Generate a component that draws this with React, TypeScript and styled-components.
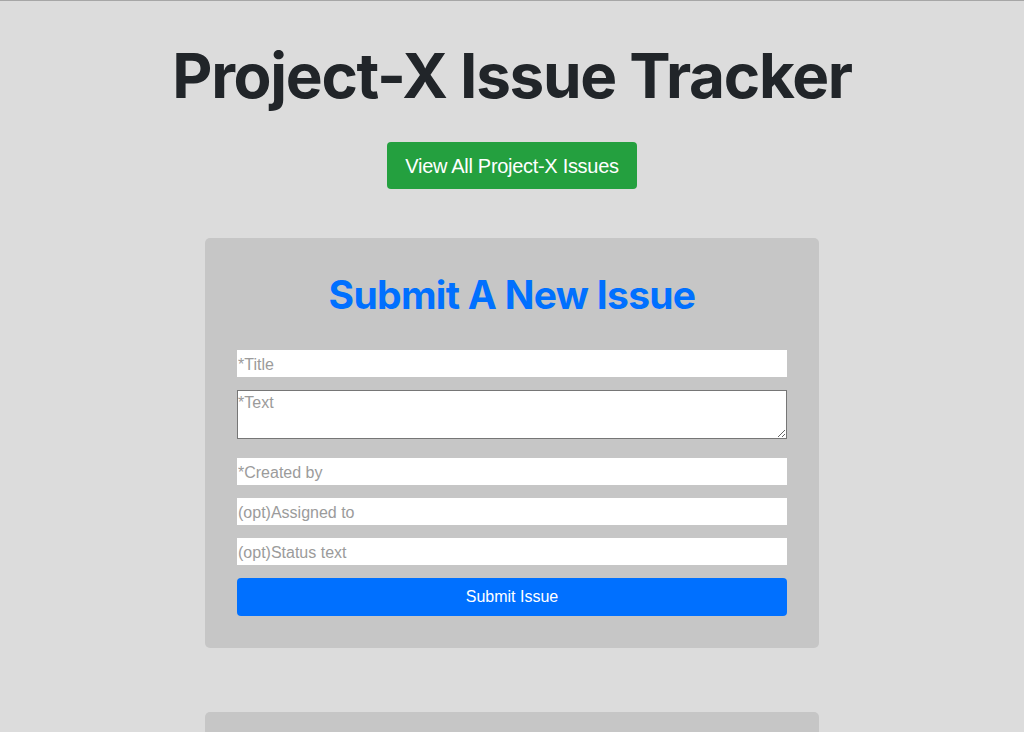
import React from "react";
import styled, { createGlobalStyle } from "styled-components";

const Global = createGlobalStyle`
  html { border-top: 1px solid #a6a6a6; background: #dcdcdc; }
  body { margin: 0; background: #dcdcdc; font-family: Inter, "Noto Sans", sans-serif; color: #212529; }
  * { box-sizing: border-box; }
`;

const Page = styled.main`
  display: flex;
  flex-direction: column;
  align-items: center;
  padding-top: 37px;
`;

const Title = styled.h1`
  margin: 0;
  font-family: Inter, sans-serif;
  font-weight: 700;
  font-size: 62px;
  line-height: 76px;
  letter-spacing: -1.3px;
  color: #212529;
`;

const GreenButton = styled.button`
  margin-top: 28px;
  width: 250px;
  height: 47px;
  padding-top: 2px;
  border: none;
  border-radius: 4px;
  background: #24a03f;
  color: #fff;
  font-family: "Liberation Sans", Arial, sans-serif;
  font-size: 20px;
  letter-spacing: -0.3px;
  cursor: pointer;
`;

const Card = styled.section<{ $first?: boolean }>`
  margin-top: ${(p) => (p.$first ? 49 : 64)}px;
  width: 614px;
  background: #c6c6c6;
  border-radius: 5px;
  padding: 32px;
  display: flex;
  flex-direction: column;
`;

const CardTitle = styled.h2`
  margin: 0 0 32px;
  text-align: center;
  font-family: Inter, sans-serif;
  font-weight: 700;
  font-size: 39px;
  line-height: 48px;
  letter-spacing: -0.7px;
  color: #0070ff;
  position: relative;
  top: 1px;
`;

const Form = styled.form`
  display: flex;
  flex-direction: column;
`;

const Field = styled.input<{ $gap?: number }>`
  height: 27px;
  width: 100%;
  margin-top: ${(p) => p.$gap ?? 0}px;
  border: none;
  background: #fff;
  padding: 2px 1px 0;
  font-family: "Liberation Sans", Arial, sans-serif;
  font-size: 16px;
  color: #212529;
  outline: none;
  &::placeholder { color: #9b9b9b; }
`;

const Area = styled.textarea`
  height: 49px;
  width: 100%;
  margin-top: 13px;
  margin-bottom: 19px;
  border: 1px solid #767676;
  background: #fff;
  padding: 3px 0 0;
  font-family: "Liberation Sans", Arial, sans-serif;
  font-size: 16px;
  resize: vertical;
  outline: none;
  display: block;
  &::placeholder { color: #9b9b9b; }
`;

const SubmitButton = styled.button`
  margin-top: 13px;
  height: 38px;
  width: 100%;
  border: none;
  border-radius: 4px;
  background: #0070ff;
  color: #fff;
  font-family: "Liberation Sans", Arial, sans-serif;
  font-size: 16px;
  padding-top: 1px;
  cursor: pointer;
`;

const Card2 = styled(Card)`
  height: 60px;
`;

export default function App() {
  return (
    <>
      <Global />
      <Page>
        <Title>Project-X Issue Tracker</Title>
        <GreenButton type="button">View All Project-X Issues</GreenButton>
        <Card $first>
          <CardTitle>Submit A New Issue</CardTitle>
          <Form onSubmit={(e) => e.preventDefault()}>
            <Field placeholder="*Title" />
            <Area placeholder="*Text" />
            <Field placeholder="*Created by" />
            <Field placeholder="(opt)Assigned to" $gap={13} />
            <Field placeholder="(opt)Status text" $gap={13} />
            <SubmitButton type="submit">Submit Issue</SubmitButton>
          </Form>
        </Card>
        <Card2 />
      </Page>
    </>
  );
}
